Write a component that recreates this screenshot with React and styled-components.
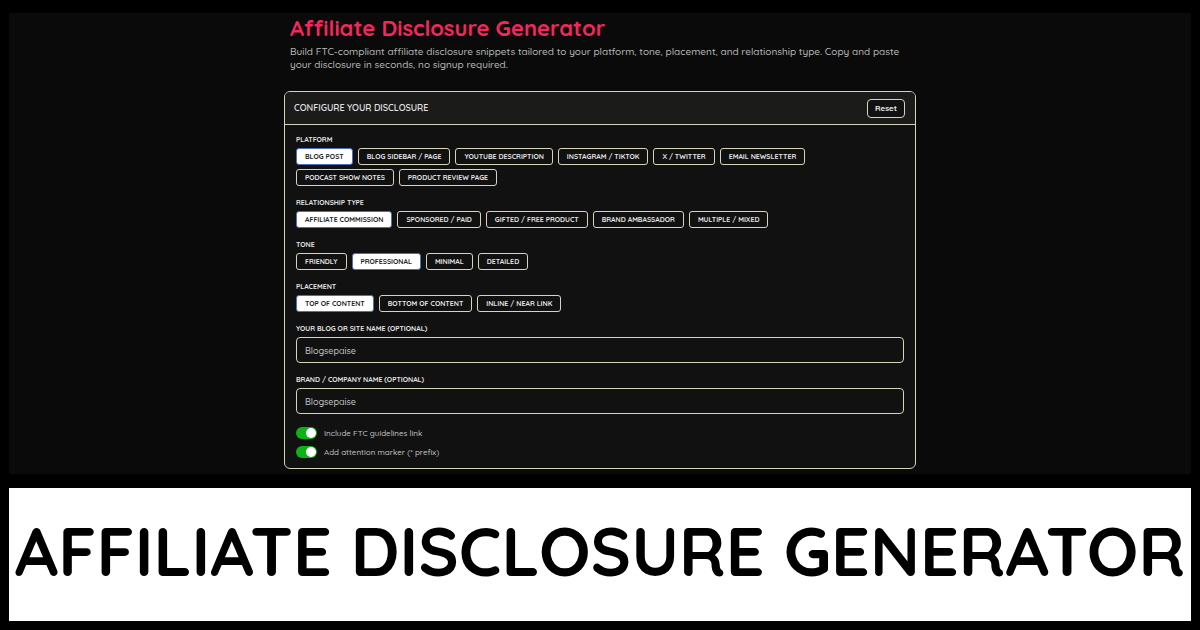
import React, { useState } from "react";
import styled, { createGlobalStyle } from "styled-components";

const GlobalStyle = createGlobalStyle`
  * { box-sizing: border-box; }
  body {
    margin: 0;
    background: #000;
    color: #e4e4e4;
    font-family: Quicksand, Lato, "Liberation Sans", sans-serif;
    font-weight: 500;
  }
  button, input { font: inherit; color: inherit; }
`;

const cream = "#d6d4bc";

const Page = styled.div`
  display: flex;
  flex-direction: column;
  gap: 14px;
  min-height: 100vh;
  padding: 13px 9px 9px;
`;

const Stage = styled.main`
  display: flex;
  flex-direction: column;
  align-items: center;
  padding: 2px 20px 5px;
  background: #0a0a0a;
`;

const Content = styled.div`
  display: flex;
  flex-direction: column;
  gap: 20px;
  width: 100%;
  max-width: 632px;
`;

const Intro = styled.header`
  padding: 0 6px;
`;

const Title = styled.h1`
  margin: 0 0 4px;
  color: #f0285c;
  font-size: 22px;
  line-height: 26px;
  font-weight: 700;
`;

const Lead = styled.p`
  margin: 0;
  color: #b8b8b8;
  font-size: 10px;
  line-height: 13px;
`;

const Card = styled.section`
  border: 1px solid ${cream};
  border-radius: 6px;
  background: #111;
  overflow: hidden;
`;

const CardHeader = styled.div`
  display: flex;
  align-items: center;
  justify-content: space-between;
  height: 33px;
  padding: 0 10px 0 9px;
  border-bottom: 1px solid ${cream};
  background: #1b1b1a;
`;

const CardTitle = styled.h2`
  margin: 0;
  font-size: 9px;
  line-height: 10px;
  font-weight: 600;
  text-transform: uppercase;
`;

const ResetButton = styled.button`
  height: 19px;
  padding: 0 7px;
  border: 1px solid ${cream};
  border-radius: 4px;
  background: #111;
  color: #f2f2f2;
  font-size: 8px;
  line-height: 10px;
  font-weight: 700;
  cursor: pointer;
`;

const CardBody = styled.form`
  display: flex;
  flex-direction: column;
  gap: 13px;
  padding: 11px 11px 10px;
`;

const Group = styled.fieldset`
  display: flex;
  flex-direction: column;
  gap: 4px;
  min-width: 0;
  margin: 0;
  padding: 0;
  border: 0;
`;

const Caption = styled.span`
  font-size: 7px;
  line-height: 8px;
  font-weight: 700;
  text-transform: uppercase;
`;

const Chips = styled.div`
  display: flex;
  flex-wrap: wrap;
  gap: 4px 5px;
`;

const Chip = styled.button`
  height: 17px;
  padding: 0 8px;
  border: 1px solid ${(p) => (p.$active ? "#4c6fc4" : cream)};
  border-radius: 3px;
  background: ${(p) => (p.$active ? "#fff" : "#111")};
  color: ${(p) => (p.$active ? "#222" : "#e4e4e4")};
  font-size: 7px;
  line-height: 9px;
  font-weight: 700;
  text-transform: uppercase;
  white-space: nowrap;
  cursor: pointer;
`;

const Field = styled.label`
  display: flex;
  flex-direction: column;
  gap: 4px;
`;

const TextInput = styled.input`
  width: 100%;
  height: 26px;
  padding: 0 8px;
  border: 1px solid ${cream};
  border-radius: 4px;
  background: #111;
  color: #c4c4c4;
  font-size: 9px;
`;

const Toggles = styled.div`
  display: flex;
  flex-direction: column;
  gap: 7px;
`;

const ToggleLabel = styled.label`
  display: flex;
  align-items: center;
  gap: 7px;
  height: 12px;
  color: #c0c0c0;
  font-size: 8px;
  line-height: 12px;
  cursor: pointer;
`;

const Switch = styled.input`
  appearance: none;
  display: flex;
  align-items: center;
  width: 21px;
  height: 12px;
  margin: 0;
  padding: 0 1px;
  border-radius: 6px;
  background: #444;
  cursor: pointer;

  &::before {
    content: "";
    width: 10px;
    height: 10px;
    border-radius: 50%;
    background: #fff;
  }
  &:checked {
    justify-content: flex-end;
    background: #0cb218;
  }
`;

const Banner = styled.footer`
  display: flex;
  flex: 1;
  align-items: center;
  justify-content: center;
  min-height: 133px;
  padding-bottom: 8px;
  background: #fff;
  color: #000;
  font-size: 68px;
  line-height: 80px;
  font-weight: 700;
  text-transform: uppercase;
  white-space: nowrap;
`;

const groups = [
  {
    name: "Platform",
    initial: "Blog Post",
    options: [
      "Blog Post",
      "Blog Sidebar / Page",
      "YouTube Description",
      "Instagram / TikTok",
      "X / Twitter",
      "Email Newsletter",
      "Podcast Show Notes",
      "Product Review Page",
    ],
  },
  {
    name: "Relationship Type",
    initial: "Affiliate Commission",
    options: [
      "Affiliate Commission",
      "Sponsored / Paid",
      "Gifted / Free Product",
      "Brand Ambassador",
      "Multiple / Mixed",
    ],
  },
  {
    name: "Tone",
    initial: "Professional",
    options: ["Friendly", "Professional", "Minimal", "Detailed"],
  },
  {
    name: "Placement",
    initial: "Top of Content",
    options: ["Top of Content", "Bottom of Content", "Inline / Near Link"],
  },
];

const initialChoices = Object.fromEntries(groups.map((g) => [g.name, g.initial]));

export default function App() {
  const [choices, setChoices] = useState(initialChoices);
  const [site, setSite] = useState("Blogsepaise");
  const [brand, setBrand] = useState("Blogsepaise");
  const [ftcLink, setFtcLink] = useState(true);
  const [marker, setMarker] = useState(true);

  const reset = () => {
    setChoices(initialChoices);
    setSite("");
    setBrand("");
    setFtcLink(true);
    setMarker(true);
  };

  return (
    <>
      <GlobalStyle />
      <Page>
        <Stage>
          <Content>
            <Intro>
              <Title>Affiliate Disclosure Generator</Title>
              <Lead>
                Build FTC-compliant affiliate disclosure snippets tailored to your platform, tone,
                placement, and relationship type. Copy and paste your disclosure in seconds, no
                signup required.
              </Lead>
            </Intro>
            <Card>
              <CardHeader>
                <CardTitle>Configure your disclosure</CardTitle>
                <ResetButton type="button" onClick={reset}>Reset</ResetButton>
              </CardHeader>
              <CardBody onSubmit={(e) => e.preventDefault()}>
                {groups.map((group) => (
                  <Group key={group.name} aria-label={group.name}>
                    <Caption>{group.name}</Caption>
                    <Chips>
                      {group.options.map((option) => (
                        <Chip
                          key={option}
                          type="button"
                          $active={choices[group.name] === option}
                          aria-pressed={choices[group.name] === option}
                          onClick={() => setChoices({ ...choices, [group.name]: option })}
                        >
                          {option}
                        </Chip>
                      ))}
                    </Chips>
                  </Group>
                ))}
                <Field>
                  <Caption>Your blog or site name (optional)</Caption>
                  <TextInput value={site} onChange={(e) => setSite(e.target.value)} />
                </Field>
                <Field>
                  <Caption>Brand / company name (optional)</Caption>
                  <TextInput value={brand} onChange={(e) => setBrand(e.target.value)} />
                </Field>
                <Toggles>
                  <ToggleLabel>
                    <Switch
                      type="checkbox"
                      checked={ftcLink}
                      onChange={(e) => setFtcLink(e.target.checked)}
                    />
                    Include FTC guidelines link
                  </ToggleLabel>
                  <ToggleLabel>
                    <Switch
                      type="checkbox"
                      checked={marker}
                      onChange={(e) => setMarker(e.target.checked)}
                    />
                    Add attention marker (* prefix)
                  </ToggleLabel>
                </Toggles>
              </CardBody>
            </Card>
          </Content>
        </Stage>
        <Banner>Affiliate Disclosure Generator</Banner>
      </Page>
    </>
  );
}
